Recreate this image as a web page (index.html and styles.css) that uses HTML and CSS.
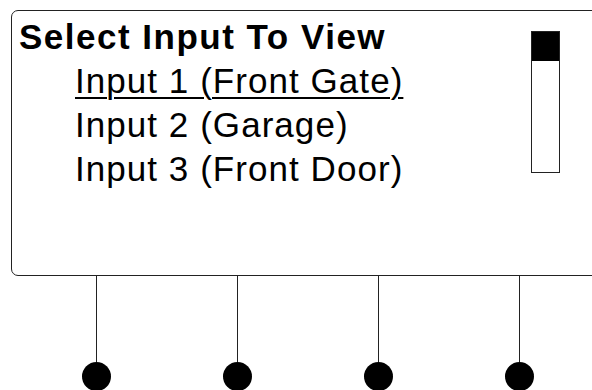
FILE: index.html
```html
<!DOCTYPE html>
<html lang="en">
<head>
  <meta charset="UTF-8">
  <title>Select Input To View</title>
  <link rel="stylesheet" href="styles.css">
</head>
<body>

  <div class="screen">
    <div class="menu">
      <div class="title">Select Input To View</div>
      <div class="item selected">Input 1 (Front Gate)</div>
      <div class="item">Input 2 (Garage)</div>
      <div class="item">Input 3 (Front Door)</div>
    </div>
    <div class="scrollbar">
      <div class="thumb"></div>
    </div>
  </div>

  <div class="buttons">
    <div class="button"><div class="stem"></div><div class="knob"></div></div>
    <div class="button"><div class="stem"></div><div class="knob"></div></div>
    <div class="button"><div class="stem"></div><div class="knob"></div></div>
    <div class="button"><div class="stem"></div><div class="knob"></div></div>
  </div>

</body>
</html>
```

FILE: styles.css
```css
html, body {
  margin: 0;
  overflow: hidden;
}
body {
  width: 592px;
  height: 390px;
  background: #fff;
  font-family: "Liberation Sans", Arial, sans-serif;
  color: #000;
}
.screen {
  margin: 10px 0 0 11px;
  width: 600px;
  height: 264px;
  border: 1.5px solid #222;
  border-radius: 7px;
  display: flex;
}
.menu {
  padding: 4px 0 0 7px;
  width: 512px;
}
.title {
  font-size: 35px;
  font-weight: bold;
  line-height: 44px;
  letter-spacing: 1.5px;
}
.item {
  font-size: 35px;
  line-height: 44px;
  letter-spacing: 1.05px;
  padding-left: 56px;
}
.selected {
  text-decoration: underline;
  text-decoration-thickness: 2px;
  text-underline-offset: 4px;
}
.scrollbar {
  margin-top: 20px;
  width: 27px;
  height: 140px;
  border: 1.5px solid #222;
}
.thumb {
  height: 29px;
  background: #000;
}
.buttons {
  display: flex;
  gap: 112px;
  padding-left: 82px;
}
.button {
  width: 29px;
  display: flex;
  flex-direction: column;
  align-items: center;
}
.stem {
  width: 1.5px;
  height: 86px;
  background: #222;
}
.knob {
  width: 29px;
  height: 29px;
  border-radius: 50%;
  background: #000;
}
```
